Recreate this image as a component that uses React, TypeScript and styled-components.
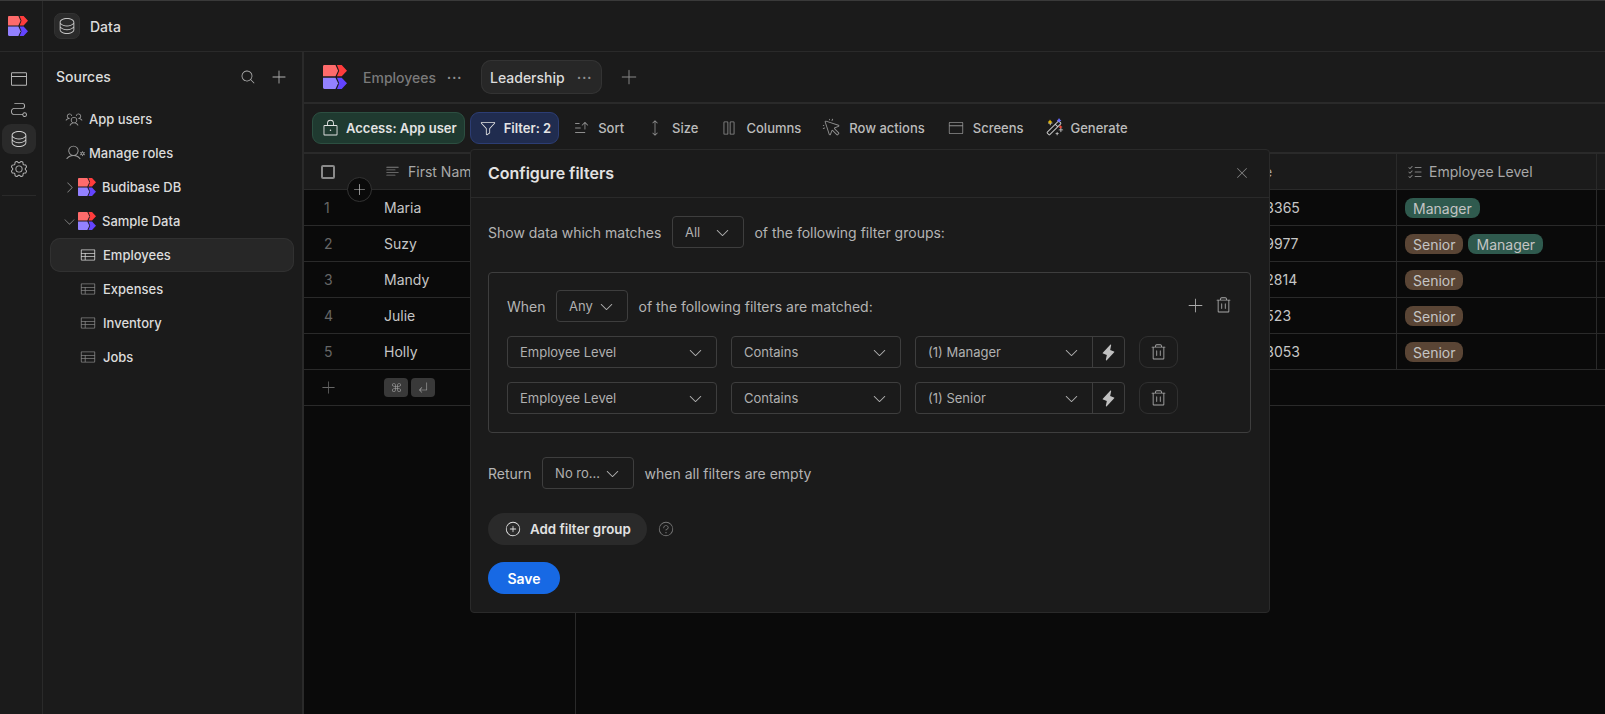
import React from 'react';
import styled, { createGlobalStyle } from 'styled-components';
import {
  PiArrowElbowDownLeftLight,
  PiArrowsVerticalLight,
  PiBrowserLight,
  PiCaretDownLight,
  PiCaretRightLight,
  PiColumnsLight,
  PiCommandLight,
  PiCursorClickLight,
  PiDatabaseLight,
  PiFunnelLight,
  PiGearLight,
  PiLightningFill,
  PiListChecksLight,
  PiLockLight,
  PiMagicWandLight,
  PiMagnifyingGlassLight,
  PiPathLight,
  PiPlusCircleLight,
  PiPlusLight,
  PiQuestionLight,
  PiSortDescendingLight,
  PiTableLight,
  PiTextAlignLeftLight,
  PiTrashLight,
  PiUserGearLight,
  PiUsersThreeLight,
  PiXLight,
} from 'react-icons/pi';

const COLORS = {
  bg: '#1b1b1b',
  line: '#2a2a2a',
  lineStrong: '#3e3e3e',
  black: '#0a0a0a',
  text: '#dcdcdc',
};

const GlobalStyle = createGlobalStyle`
  html, body, #root { margin: 0; height: 100%; }
  body {
    background: ${COLORS.bg};
    color: ${COLORS.text};
    font-family: Inter, "Liberation Sans", sans-serif;
    font-size: 14px;
    overflow: hidden;
  }
  * { box-sizing: border-box; }
`;

const CursorIcon = styled(PiCursorClickLight)`
  margin: 0 -1px;
`;

function Logo({ size = 20 }: { size?: number }) {
  return (
    <svg width={size} height={size} viewBox='0 0 20 20'>
      <path d='M0 1.2C0 .5.5 0 1.2 0H10.4L12.6 4.7 10.4 9.4H0z' fill='#ff6b6b' />
      <path d='M11.6 0H15.6L20 4.7 15.6 9.4H11.6L13.5 4.7z' fill='#ff3c3c' />
      <path d='M0 10.6H10.4L12.6 15.3 10.4 20H1.2C.5 20 0 19.5 0 18.8z' fill='#9381ff' />
      <path d='M11.6 10.6H15.6L20 15.3 15.6 20H11.6L13.5 15.3z' fill='#6344ff' />
    </svg>
  );
}

function Wand() {
  return (
    <WandBox>
      <PiMagicWandLight size={20} />
      <svg width={20} height={20} viewBox='0 0 20 20'>
        <path d='M6 1.6l.9 1.5 1.5.9-1.5.8-.9 1.5-.8-1.5-1.5-.8 1.5-.9z' fill='#e3b505' />
        <path d='M15 0l.9 1.6 1.5.8-1.5.8-.9 1.6-.8-1.6-1.5-.8 1.5-.8z' fill='#6a6cff' />
        <path d='M16.5 7l.8 1.3 1.3.8-1.3.7-.8 1.3-.7-1.3-1.3-.7 1.3-.8z' fill='#ef4a3c' />
      </svg>
    </WandBox>
  );
}

const people = [
  { name: 'Maria', phone: '0141 4963365', levels: ['Manager'] },
  { name: 'Suzy', phone: '0141 4969977', levels: ['Senior', 'Manager'] },
  { name: 'Mandy', phone: '0141 4962814', levels: ['Senior'] },
  { name: 'Julie', phone: '0141 496523', levels: ['Senior'] },
  { name: 'Holly', phone: '0141 4963053', levels: ['Senior'] },
];

const sources = [
  { label: 'Employees', active: true },
  { label: 'Expenses' },
  { label: 'Inventory' },
  { label: 'Jobs' },
];

const toolbarItems = [
  { label: 'Sort', icon: <PiSortDescendingLight size={18} /> },
  { label: 'Size', icon: <PiArrowsVerticalLight size={18} /> },
  { label: 'Columns', icon: <PiColumnsLight size={18} /> },
  { label: 'Row actions', icon: <CursorIcon size={20} /> },
  { label: 'Screens', icon: <PiBrowserLight size={18} /> },
  { label: 'Generate', icon: <Wand /> },
];

function FilterRow({ value }: { value: string }) {
  return (
    <Fields>
      <Select $width={210}>
        Employee Level
        <PiCaretDownLight size={17} />
      </Select>
      <Select $width={170}>
        Contains
        <PiCaretDownLight size={17} />
      </Select>
      <ValueField>
        <ValueText>
          {value}
          <PiCaretDownLight size={17} />
        </ValueText>
        <Bolt>
          <PiLightningFill size={17} />
        </Bolt>
      </ValueField>
      <TrashButton>
        <PiTrashLight size={19} />
      </TrashButton>
    </Fields>
  );
}

export default function App() {
  return (
    <>
      <GlobalStyle />
      <Page>
        <Rail>
          <RailLogo>
            <Logo />
          </RailLogo>
          <RailNav>
            <RailIcon>
              <PiBrowserLight size={20} />
            </RailIcon>
            <RailIcon>
              <PiPathLight size={20} />
            </RailIcon>
            <RailIcon $active>
              <PiDatabaseLight size={20} />
            </RailIcon>
            <RailIcon>
              <PiGearLight size={20} />
            </RailIcon>
            <RailDivider />
          </RailNav>
        </Rail>
        <Main>
          <TopBar>
            <TopIcon>
              <PiDatabaseLight size={20} />
            </TopIcon>
            Data
          </TopBar>
          <Body>
            <Sidebar>
              <SidebarHead>
                Sources
                <SidebarTools>
                  <PiMagnifyingGlassLight size={16} />
                  <PiPlusLight size={18} />
                </SidebarTools>
              </SidebarHead>
              <NavRow $indent={14}>
                <NavIcon>
                  <PiUsersThreeLight size={18} />
                </NavIcon>
                App users
              </NavRow>
              <NavRow $indent={14}>
                <NavIcon>
                  <PiUserGearLight size={20} />
                </NavIcon>
                Manage roles
              </NavRow>
              <NavRow $indent={12}>
                <Caret>
                  <PiCaretRightLight size={15} />
                </Caret>
                <Logo size={18} />
                <SourceName>Budibase DB</SourceName>
              </NavRow>
              <NavRow $indent={12}>
                <Caret>
                  <PiCaretDownLight size={15} />
                </Caret>
                <Logo size={18} />
                <SourceName>Sample Data</SourceName>
              </NavRow>
              {sources.map((s) => (
                <NavRow key={s.label} $indent={29} $active={s.active}>
                  <TableIcon $active={s.active}>
                    <PiTableLight size={18} />
                  </TableIcon>
                  {s.label}
                </NavRow>
              ))}
            </Sidebar>
            <Content>
              <Tabs>
                <Logo size={24} />
                <Tab>
                  Employees
                  <Dots>···</Dots>
                </Tab>
                <Tab $active>
                  Leadership
                  <Dots>···</Dots>
                </Tab>
                <AddTab>
                  <PiPlusLight size={20} />
                </AddTab>
              </Tabs>
              <Toolbar>
                <AccessButton>
                  <PiLockLight size={19} />
                  Access: App user
                </AccessButton>
                <FilterButton>
                  <PiFunnelLight size={18} />
                  Filter: 2
                </FilterButton>
                <ToolItems>
                  {toolbarItems.map((t) => (
                    <ToolItem key={t.label}>
                      {t.icon}
                      {t.label}
                    </ToolItem>
                  ))}
                </ToolItems>
              </Toolbar>
              <Grid>
                <HeaderRow>
                  <IndexCell>
                    <Checkbox />
                  </IndexCell>
                  <NameCell>
                    <HeadLabel>
                      <PiTextAlignLeftLight size={17} />
                      First Name
                    </HeadLabel>
                  </NameCell>
                  <MiddleCell>
                    <HeadLabel>
                      <PiTextAlignLeftLight size={17} />
                      Phone
                    </HeadLabel>
                  </MiddleCell>
                  <LevelCell>
                    <LevelHead>
                      <PiListChecksLight size={18} />
                      Employee Level
                    </LevelHead>
                  </LevelCell>
                  <EndCell />
                  <AddColumn>
                    <PiPlusLight size={15} />
                  </AddColumn>
                </HeaderRow>
                {people.map((p, i) => (
                  <DataRow key={p.name}>
                    <IndexCell $number>{i + 1}</IndexCell>
                    <NameCell>{p.name}</NameCell>
                    <MiddleCell>{p.phone}</MiddleCell>
                    <LevelCell>
                      <TagList>
                        {p.levels.map((l) => (
                          <Tag key={l} $level={l}>
                            {l}
                          </Tag>
                        ))}
                      </TagList>
                    </LevelCell>
                    <EndCell />
                  </DataRow>
                ))}
                <AddRow>
                  <IndexCell>
                    <PiPlusLight size={17} />
                  </IndexCell>
                  <NameCell $plain>
                    <Key>
                      <PiCommandLight size={13} />
                    </Key>
                    <Key>
                      <PiArrowElbowDownLeftLight size={13} />
                    </Key>
                  </NameCell>
                </AddRow>
                <Filler />
              </Grid>
            </Content>
          </Body>
        </Main>
        <Popover>
          <PopoverHead>
            Configure filters
            <PiXLight size={16} />
          </PopoverHead>
          <PopoverBody>
            <Line>
              Show data which matches
              <Select $width={72}>
                All
                <PiCaretDownLight size={17} />
              </Select>
              of the following filter groups:
            </Line>
            <Group>
              <GroupHead>
                <Line>
                  When
                  <Select $width={72}>
                    Any
                    <PiCaretDownLight size={17} />
                  </Select>
                  of the following filters are matched:
                </Line>
                <GroupTools>
                  <PiPlusLight size={19} />
                  <PiTrashLight size={19} />
                </GroupTools>
              </GroupHead>
              <FilterRow value='(1) Manager' />
              <FilterRow value='(1) Senior' />
            </Group>
            <Line>
              Return
              <Select $width={92}>
                No ro...
                <PiCaretDownLight size={17} />
              </Select>
              when all filters are empty
            </Line>
            <AddGroupRow>
              <AddGroup>
                <PiPlusCircleLight size={18} />
                Add filter group
              </AddGroup>
              <PiQuestionLight size={18} />
            </AddGroupRow>
            <Save>Save</Save>
          </PopoverBody>
        </Popover>
      </Page>
    </>
  );
}

const Page = styled.div`
  position: relative;
  display: flex;
  height: 714px;
  overflow: hidden;
  border-top: 1px solid #3a3a3a;
`;

const Rail = styled.div`
  width: 43px;
  flex-shrink: 0;
  border-right: 1px solid ${COLORS.line};
`;

const RailLogo = styled.div`
  display: flex;
  align-items: center;
  height: 51px;
  padding-left: 8px;
  border-bottom: 1px solid ${COLORS.line};
`;

const RailNav = styled.div`
  display: flex;
  flex-direction: column;
  align-items: center;
  padding: 12px 6px 0 2px;
`;

const RailIcon = styled.div<{ $active?: boolean }>`
  display: flex;
  align-items: center;
  justify-content: center;
  width: 34px;
  height: 30px;
  border-radius: 9px;
  color: ${(p) => (p.$active ? '#d0d0d0' : '#b8b8b8')};
  background: ${(p) => (p.$active ? '#2a2a2a' : 'transparent')};
`;

const RailDivider = styled.div`
  align-self: stretch;
  height: 1px;
  margin-top: 11px;
  background: ${COLORS.line};
`;

const Main = styled.div`
  flex: 1;
  min-width: 0;
  display: flex;
  flex-direction: column;
`;

const TopBar = styled.div`
  display: flex;
  align-items: center;
  gap: 10px;
  height: 51px;
  flex-shrink: 0;
  padding-left: 11px;
  border-bottom: 1px solid ${COLORS.line};
  font-weight: 500;
`;

const TopIcon = styled.div`
  display: flex;
  align-items: center;
  justify-content: center;
  width: 26px;
  height: 26px;
  border: 1px solid #323232;
  border-radius: 7px;
  background: #2a2a2a;
  color: #c4c4c4;
`;

const Body = styled.div`
  flex: 1;
  min-height: 0;
  display: flex;
`;

const Sidebar = styled.div`
  width: 261px;
  flex-shrink: 0;
  padding: 0 8px 0 7px;
  border-right: 2px solid ${COLORS.line};
`;

const SidebarHead = styled.div`
  display: flex;
  align-items: center;
  justify-content: space-between;
  height: 49px;
  margin-bottom: 1px;
  padding: 0 6px;
  font-weight: 500;
`;

const SidebarTools = styled.div`
  display: flex;
  align-items: center;
  gap: 14px;
  color: #b4b4b4;
`;

const NavRow = styled.div<{ $indent: number; $active?: boolean }>`
  display: flex;
  align-items: center;
  height: 34px;
  padding-left: ${(p) => p.$indent}px;
  border-radius: 10px;
  font-size: 13px;
  font-weight: 500;
  color: ${COLORS.text};
  background: ${(p) => (p.$active ? '#272727' : 'transparent')};
  box-shadow: ${(p) => (p.$active ? 'inset 0 0 0 1px #313131' : 'none')};
`;

const NavIcon = styled.span`
  display: flex;
  width: 25px;
  padding-left: 1px;
  color: #989898;
`;

const Caret = styled.span`
  display: flex;
  width: 16px;
  color: #8a8a8a;
`;

const SourceName = styled.span`
  margin-left: 6px;
`;

const TableIcon = styled.span<{ $active?: boolean }>`
  display: flex;
  width: 24px;
  color: ${(p) => (p.$active ? '#d0d0d0' : '#808080')};
`;

const Content = styled.div`
  flex: 1;
  min-width: 0;
  display: flex;
  flex-direction: column;
`;

const Tabs = styled.div`
  display: flex;
  align-items: center;
  height: 52px;
  flex-shrink: 0;
  padding-left: 19px;
  border-bottom: 2px solid ${COLORS.line};
`;

const Tab = styled.div<{ $active?: boolean }>`
  display: flex;
  align-items: center;
  justify-content: space-between;
  height: 34px;
  width: ${(p) => (p.$active ? '121px' : '134px')};
  padding: 0 ${(p) => (p.$active ? '10px' : '19px')} 0 ${(p) => (p.$active ? '9px' : '16px')};
  border-radius: 10px;
  font-weight: 500;
  color: ${(p) => (p.$active ? COLORS.text : '#7a7a7a')};
  background: ${(p) => (p.$active ? '#272727' : 'transparent')};
  box-shadow: ${(p) => (p.$active ? 'inset 0 0 0 1px #333' : 'none')};
`;

const Dots = styled.span`
  color: #909090;
  font-size: 15px;
  letter-spacing: 0.5px;
`;

const AddTab = styled.span`
  display: flex;
  margin-left: 17px;
  color: #8a8a8a;
`;

const Toolbar = styled.div`
  display: flex;
  align-items: center;
  gap: 5px;
  height: 50px;
  flex-shrink: 0;
  padding-left: 8px;
  border-bottom: 2px solid ${COLORS.line};
`;

const AccessButton = styled.div`
  display: flex;
  align-items: center;
  gap: 6px;
  height: 32px;
  padding: 0 7px 0 8px;
  border-radius: 9px;
  border: 1px solid #2c4f41;
  background: #1f3a30;
  color: #e4e4e4;
  font-size: 13px;
  font-weight: 600;
`;

const FilterButton = styled(AccessButton)`
  gap: 7px;
  border-color: #2c3d74;
  background: #202c4f;
`;

const ToolItems = styled.div`
  display: flex;
  align-items: center;
  gap: 22px;
  margin-left: 8px;
`;

const ToolItem = styled.div`
  display: flex;
  align-items: center;
  gap: 8px;
  color: #bcbcbc;
  font-size: 13px;
  font-weight: 500;
  svg { color: #8e8e8e; }
`;

const WandBox = styled.span`
  position: relative;
  display: flex;
  margin: -1px -1px -1px -2px;
  svg { color: #c8c8c8; }
  svg + svg { position: absolute; left: 0; top: 0; }
`;

const Grid = styled.div`
  flex: 1;
  min-height: 0;
  display: flex;
  flex-direction: column;
  background: ${COLORS.black};
`;

const RowBase = styled.div`
  display: flex;
  height: 36px;
  flex-shrink: 0;
  border-bottom: 1px solid ${COLORS.line};
`;

const HeaderRow = styled(RowBase)`
  position: relative;
  background: ${COLORS.bg};
  color: #a8a8a8;
`;

const DataRow = styled(RowBase)`
  color: #c6c6c6;
`;

const AddRow = styled(RowBase)``;

const IndexCell = styled.div<{ $number?: boolean }>`
  display: flex;
  align-items: center;
  width: 72px;
  flex-shrink: 0;
  padding-left: ${(p) => (p.$number ? '20px' : '16px')};
  color: #666;
`;

const Checkbox = styled.span`
  width: 14px;
  height: 14px;
  margin-left: 1px;
  border: 2px solid #8a8a8a;
  border-radius: 2px;
`;

const AddColumn = styled.span`
  position: absolute;
  left: 43px;
  top: 23px;
  display: flex;
  align-items: center;
  justify-content: center;
  width: 25px;
  height: 25px;
  border: 1px solid #333;
  border-radius: 50%;
  background: ${COLORS.black};
  color: #c8c8c8;
  z-index: 1;
`;

const NameCell = styled.div<{ $plain?: boolean }>`
  display: flex;
  align-items: center;
  gap: 3px;
  width: 200px;
  flex-shrink: 0;
  padding-left: 8px;
  border-right: 1px solid ${(p) => (p.$plain ? 'transparent' : COLORS.line)};
`;

const HeadLabel = styled.span`
  display: flex;
  align-items: center;
  gap: 7px;
  svg { color: #808080; }
`;

const LevelHead = styled(HeadLabel)`
  gap: 5px;
  padding-left: 1px;
`;

const MiddleCell = styled.div`
  display: flex;
  align-items: center;
  width: 821px;
  flex-shrink: 0;
  padding-left: 630px;
  border-right: 1px solid ${COLORS.line};
`;

const LevelCell = styled.div`
  display: flex;
  align-items: center;
  width: 200px;
  flex-shrink: 0;
  padding-left: 8px;
  border-right: 1px solid ${COLORS.line};
`;

const EndCell = styled.div`
  flex: 1;
`;

const TagList = styled.div`
  display: flex;
  gap: 5px;
`;

const Tag = styled.span<{ $level: string }>`
  height: 20px;
  line-height: 21px;
  padding: 0 8px;
  border-radius: 8px;
  background: ${(p) => (p.$level === 'Manager' ? '#2f5a4e' : '#5a4535')};
  color: #c4c4c4;
  font-size: 14px;
`;

const Key = styled.span`
  display: flex;
  align-items: center;
  justify-content: center;
  width: 24px;
  height: 19px;
  border-radius: 4px;
  background: #393939;
  color: #aaa;
`;

const Filler = styled.div`
  flex: 1;
  width: 272px;
  border-right: 1px solid ${COLORS.line};
`;

const Popover = styled.div`
  position: absolute;
  left: 470px;
  top: 148px;
  width: 800px;
  height: 464px;
  border: 1px solid #2a2a2a;
  border-radius: 4px;
  background: ${COLORS.bg};
  color: #b4b4b4;
  z-index: 2;
`;

const PopoverHead = styled.div`
  display: flex;
  align-items: center;
  justify-content: space-between;
  height: 48px;
  padding: 0 19px 2px 17px;
  border-bottom: 1px solid ${COLORS.line};
  color: #e2e2e2;
  font-size: 16px;
  font-weight: 600;
  svg { color: #8a8a8a; }
`;

const PopoverBody = styled.div`
  display: flex;
  flex-direction: column;
  align-items: flex-start;
  padding: 18px 18px 0 17px;
`;

const Line = styled.div`
  display: flex;
  align-items: center;
  gap: 10.5px;
`;

const Select = styled.div<{ $width: number }>`
  display: flex;
  align-items: center;
  justify-content: space-between;
  width: ${(p) => p.$width}px;
  height: 32px;
  padding: 0 12px;
  border: 1px solid ${COLORS.lineStrong};
  border-radius: 4px;
  font-size: 13px;
  color: #b0b0b0;
  flex-shrink: 0;
  svg { color: #b0b0b0; }
`;

const Group = styled.div`
  align-self: stretch;
  display: flex;
  flex-direction: column;
  gap: 14px;
  margin: 24px 0;
  padding: 17px 18px 18px;
  border: 1px solid ${COLORS.lineStrong};
  border-radius: 4px;
`;

const GroupHead = styled.div`
  display: flex;
  align-items: center;
  justify-content: space-between;
`;

const GroupTools = styled.div`
  display: flex;
  align-items: center;
  gap: 9px;
  margin-right: -1px;
  padding-bottom: 2px;
  color: #aaa;
`;

const Fields = styled.div`
  display: flex;
  gap: 14px;
`;

const ValueField = styled.div`
  display: flex;
  width: 210px;
  height: 32px;
  border: 1px solid ${COLORS.lineStrong};
  border-radius: 4px;
`;

const ValueText = styled.div`
  flex: 1;
  display: flex;
  align-items: center;
  justify-content: space-between;
  padding: 0 12px;
  font-size: 13px;
  color: #b0b0b0;
`;

const Bolt = styled.div`
  display: flex;
  align-items: center;
  justify-content: center;
  width: 32px;
  border-left: 1px solid ${COLORS.lineStrong};
  color: #c0c0c0;
`;

const TrashButton = styled.div`
  display: flex;
  align-items: center;
  justify-content: center;
  width: 39px;
  height: 32px;
  border: 1px solid #303030;
  border-radius: 9px;
  color: #a8a8a8;
`;

const AddGroupRow = styled.div`
  display: flex;
  align-items: center;
  gap: 10px;
  margin-top: 24px;
  color: #777;
`;

const AddGroup = styled.div`
  display: flex;
  align-items: center;
  gap: 8px;
  height: 32px;
  padding: 0 16px;
  border-radius: 16px;
  background: #2a2a2a;
  color: #e2e2e2;
  font-size: 13.3px;
  font-weight: 600;
`;

const Save = styled.div`
  display: flex;
  align-items: center;
  justify-content: center;
  width: 72px;
  height: 32px;
  margin-top: 17px;
  border-radius: 16px;
  background: #1769e4;
  color: #fff;
  font-size: 14px;
  font-weight: 600;
`;
